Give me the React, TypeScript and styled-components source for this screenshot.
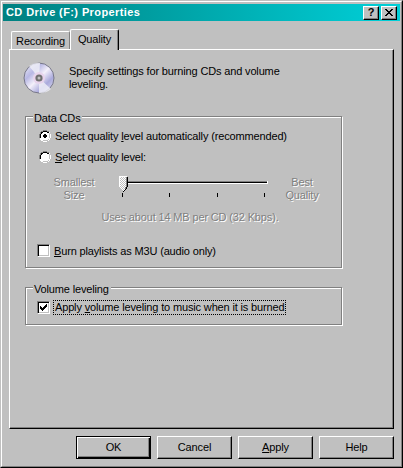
import React from "react";
import styled, { createGlobalStyle } from "styled-components";

const Global = createGlobalStyle`
  html, body { margin: 0; padding: 0; background: #c0c0c0; }
  body { font: 11px "Liberation Sans", Arial, sans-serif; color: #000; letter-spacing: -0.15px; }
  * { box-sizing: border-box; }
`;

const Win = styled.div`
  width: 403px; height: 468px; background: #c0c0c0;
  border: 1px solid; border-color: #c0c0c0 #000 #000 #c0c0c0;
  display: flex; flex-direction: column;
`;
const WinInner = styled.div`
  flex: 1; border: 1px solid; border-color: #fff #808080 #808080 #fff;
  padding: 2px 1px 2px 1px; display: flex; flex-direction: column;
`;
const TitleBar = styled.div`
  height: 17px; display: flex; align-items: center; padding: 0 3px 0 3px;
  background: linear-gradient(90deg, #008080 0%, #00d0d8 100%);
`;
const TitleText = styled.div`
  flex: 1; color: #fff; font-weight: bold; font-size: 11px; letter-spacing: 0.4px; white-space: nowrap;
  padding-bottom: 2px;
`;
const CapBtn = styled.div<{ $gap?: number }>`
  width: 16px; height: 14px; margin-right: ${p => p.$gap ?? 0}px; background: #c0c0c0;
  border: 1px solid; border-color: #fff #000 #000 #fff; box-shadow: inset -1px -1px 0 #808080;
  display: flex; align-items: center; justify-content: center;
  font-weight: bold; font-size: 11px; line-height: 1; letter-spacing: 0;
`;
const Body = styled.div`
  flex: 1; padding: 8px 6px 0 6px; display: flex; flex-direction: column;
`;
const TabRow = styled.div`
  height: 20px; display: flex; align-items: flex-end; padding-left: 2px; position: relative; z-index: 1;
`;
const Tab = styled.div<{ $active?: boolean }>`
  height: ${p => (p.$active ? 21 : 18)}px; width: ${p => (p.$active ? 49 : 59)}px;
  margin-bottom: ${p => (p.$active ? -1 : 0)}px;
  background: #c0c0c0; border-top: 1px solid #fff; border-left: 1px solid #fff;
  border-right: ${p => (p.$active ? "1px solid #000" : "1px solid #808080")};
  box-shadow: ${p => (p.$active ? "inset -1px 0 0 #808080" : "none")};
  border-radius: 2px 2px 0 0;
  display: flex; align-items: center; justify-content: center;
  padding-bottom: ${p => (p.$active ? 3 : 0)}px;
`;
const Panel = styled.div`
  height: 380px; border: 1px solid; border-color: #fff #000 #000 #fff;
  box-shadow: inset -1px -1px 0 #808080;
  padding: 12px 0 0 13px; display: flex; flex-direction: column;
`;
const Intro = styled.div`
  display: flex; gap: 14px; align-items: flex-start; height: 54px;
`;
const IntroText = styled.div`
  width: 240px; line-height: 13px; margin-top: 3px;
`;
const Group = styled.div<{ $w: number; $h: number; $mb?: number }>`
  position: relative; width: ${p => p.$w}px; height: ${p => p.$h}px; margin: 0 0 ${p => p.$mb ?? 0}px 2px;
  border: 1px solid #808080; box-shadow: 1px 1px 0 #fff, inset 1px 1px 0 #fff;
`;
const Legend = styled.div`
  position: absolute; top: -5px; left: 7px; background: #c0c0c0; padding: 0 2px 0 1px; line-height: 13px;
`;
const Row = styled.div<{ $top: number; $left?: number }>`
  display: flex; align-items: center; gap: 4px; height: 13px;
  margin-top: ${p => p.$top}px; margin-left: ${p => p.$left ?? 13}px; white-space: nowrap;
`;
const U = styled.span`text-decoration: underline;`;
const CheckBox = styled.div`
  width: 13px; height: 13px; background: #fff; flex: none;
  border: 1px solid; border-color: #808080 #fff #fff #808080;
  box-shadow: inset 1px 1px 0 #000, inset -1px -1px 0 #c0c0c0;
  display: flex; align-items: center; justify-content: center;
`;
const Focus = styled.span`
  outline: 1px dotted #000; outline-offset: 0; padding: 0 1px; line-height: 13px;
`;
const SliderRow = styled.div`
  display: flex; margin-top: 13px; height: 33px; margin-left: 17px;
`;
const Disabled = styled.div<{ $w?: number }>`
  color: #808080; text-shadow: 1px 1px 0 #fff; text-align: center; line-height: 13px;
  ${p => (p.$w ? `width: ${p.$w}px; flex: none;` : "")}
`;
const Slider = styled.div`
  width: 161px; margin: 0 1px 0 12px; flex: none;
`;
const UsesText = styled(Disabled)`
  margin: 2px 0 0 -1px; width: 330px;
`;

const CD = () => (
  <svg width="32" height="32" viewBox="0 0 32 32" style={{ flex: "none" }}>
    <defs>
      <linearGradient id="a" x1="0" y1="0" x2="1" y2="1">
        <stop offset="0" stopColor="#f4f4fa" />
        <stop offset="0.3" stopColor="#b8b8e4" />
        <stop offset="0.5" stopColor="#f4f0fa" />
        <stop offset="0.72" stopColor="#aaaadc" />
        <stop offset="1" stopColor="#e8e8f4" />
      </linearGradient>
    </defs>
    <circle cx="16" cy="16" r="15" fill="url(#a)" stroke="#777788" />
    <path d="M16 16 L6 4 A15 15 0 0 1 17 1 Z M16 16 L28 27 A15 15 0 0 1 16 31 Z" fill="#f0f0f8" opacity=".8" />
    <circle cx="16" cy="16" r="6" fill="#e8d4ec" />
    <circle cx="16" cy="16" r="3.6" fill="#707070" />
    <circle cx="16" cy="16" r="1.5" fill="#c0c0c0" />
  </svg>
);

const Radio = ({ on }: { on?: boolean }) => (
  <svg width="12" height="12" viewBox="0 0 12 12" style={{ flex: "none" }} shapeRendering="crispEdges">
    <path d="M4 0h4v1h2v1h1v2h1v4h-1v2h-1v1H8v1H4v-1H2v-1H1V8H0V4h1V2h1V1h2z" fill="#fff" />
    <path d="M4 0h4v1h2v1H8V1H4v1H2v2H1v4H0V4h1V2h1V1h2z" fill="#808080" />
    <path d="M4 1h4v1h2v1H8V2H4v1H3v1H2v4H1V4h1V3h0V2h2z" fill="#000" />
    <path d="M10 3h1v5h-1zM9 9h1v1H9zM4 10h5v1H4z" fill="#c0c0c0" />
    {on && <path d="M5 4h2v1h1v2H7v1H5V7H4V5h1z" fill="#000" />}
  </svg>
);

const Track = () => (
  <svg width="161" height="24" viewBox="0 0 161 24" shapeRendering="crispEdges">
    <defs>
      <pattern id="dither" width="2" height="2" patternUnits="userSpaceOnUse">
        <rect width="2" height="2" fill="#c0c0c0" />
        <rect width="1" height="1" fill="#fff" />
        <rect x="1" y="1" width="1" height="1" fill="#fff" />
      </pattern>
    </defs>
    <rect x="5" y="5" width="145" height="1" fill="#808080" />
    <rect x="5" y="6" width="145" height="1" fill="#000" />
    <rect x="5" y="7" width="145" height="1" fill="#fff" />
    <rect x="150" y="5" width="1" height="3" fill="#fff" />
    {[5, 52, 100, 147].map(x => <rect key={x} x={x} y={17} width="1" height="4" fill="#000" />)}
    <path d="M2 0h8v11l-4 5H6l-4-5z" fill="url(#dither)" />
    <path d="M2 0h8v1H3v10H2z" fill="#fff" />
    <path d="M10 1h1v10h-1zM9 11h1v2H9zM8 13h1v1H8zM7 14h1v1H7zM6 15h1v1H6z" fill="#000" />
    <path d="M9 1h1v10H9zM8 11h1v2H8z" fill="#808080" />
  </svg>
);

const ButtonRow = styled.div`
  display: flex; justify-content: flex-end; gap: 6px; margin-top: 7px;
`;
const Btn = styled.div<{ $def?: boolean }>`
  width: 75px; height: 23px; background: #c0c0c0; padding-bottom: 1px;
  display: flex; align-items: center; justify-content: center;
  border: 1px solid; border-color: ${p => (p.$def ? "#000" : "#fff #000 #000 #fff")};
  box-shadow: ${p => (p.$def ? "inset 1px 1px 0 #fff, inset -1px -1px 0 #000, inset -2px -2px 0 #808080" : "inset -1px -1px 0 #808080")};
`;

export default function App() {
  return (
    <>
      <Global />
      <Win>
        <WinInner>
          <TitleBar>
            <TitleText>CD Drive (F:) Properties</TitleText>
            <CapBtn $gap={2}>?</CapBtn>
            <CapBtn>
              <svg width="8" height="7" viewBox="0 0 8 7" shapeRendering="crispEdges">
                <path d="M0 0h2v1h1v1h2V1h1V0h2v1H7v1H6v1H5v1h1v1h1v1h1v1H6V6H5V5H3v1H2v1H0V6h1V5h1V4h1V3H2V2H1V1H0z" />
              </svg>
            </CapBtn>
          </TitleBar>
          <Body>
            <TabRow>
              <Tab>Recording</Tab>
              <Tab $active>Quality</Tab>
            </TabRow>
            <Panel>
              <Intro>
                <CD />
                <IntroText>Specify settings for burning CDs and volume leveling.</IntroText>
              </Intro>
              <Group $w={317} $h={152} $mb={19}>
                <Legend>Data CDs</Legend>
                <Row $top={12}><Radio on /><span>Select quality <U>l</U>evel automatically (recommended)</span></Row>
                <Row $top={8}><Radio /><span><U>S</U>elect quality level:</span></Row>
                <SliderRow>
                  <Disabled $w={62}>Smallest<br />Size</Disabled>
                  <Slider><Track /></Slider>
                  <Disabled $w={46}>Best<br />Quality</Disabled>
                </SliderRow>
                <UsesText>Uses about 14 MB per CD (32 Kbps).</UsesText>
                <Row $top={20} $left={11}><CheckBox /><span><U>B</U>urn playlists as M3U (audio only)</span></Row>
              </Group>
              <Group $w={317} $h={38}>
                <Legend>Volume leveling</Legend>
                <Row $top={13} $left={11}>
                  <CheckBox>
                    <svg width="7" height="7" viewBox="0 0 7 7" shapeRendering="crispEdges">
                      <path d="M6 0h1v3H6v1H5v1H4v1H3v1H2V6H1V5H0V2h1v1h1v1h1V3h1V2h1V1h1z" />
                    </svg>
                  </CheckBox>
                  <Focus>Apply <U>v</U>olume leveling to music when it is burned</Focus>
                </Row>
              </Group>
            </Panel>
            <ButtonRow>
              <Btn $def>OK</Btn>
              <Btn>Cancel</Btn>
              <Btn><span><U>A</U>pply</span></Btn>
              <Btn>Help</Btn>
            </ButtonRow>
          </Body>
        </WinInner>
      </Win>
    </>
  );
}
